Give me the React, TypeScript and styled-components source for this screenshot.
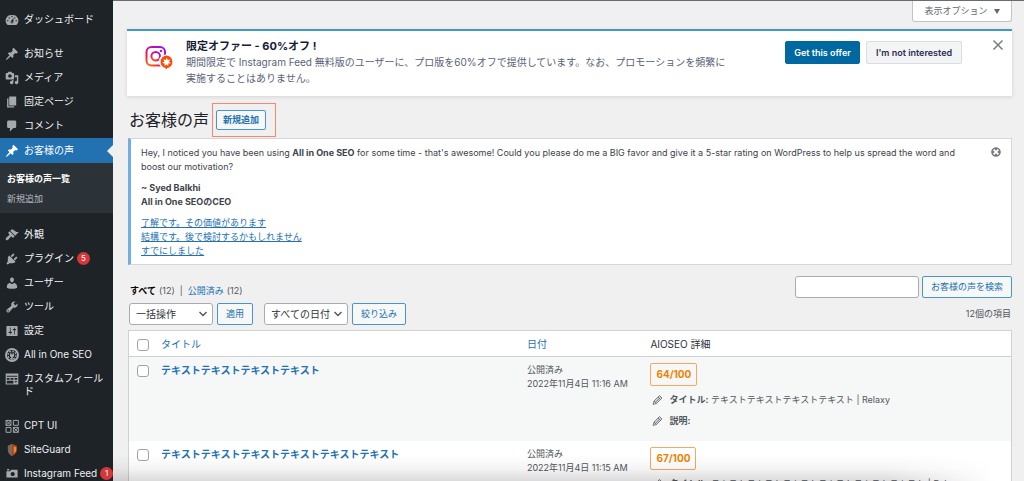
import React from "react";
import styled, { createGlobalStyle } from "styled-components";

const Global = createGlobalStyle`
  * { box-sizing: border-box; }
  body {
    margin: 0;
    background: #f0f0f1;
    color: #3c434a;
    font-family: Inter, "Noto Sans CJK JP", sans-serif;
    font-size: 9px;
    line-height: 14px;
  }
  ul { list-style: none; margin: 0; padding: 0; }
  p { margin: 0; }
  button, input, select { font: inherit; }
  button { cursor: pointer; }
`;

const Shell = styled.div`
  position: relative;
  display: grid;
  grid-template-columns: 113px minmax(0, 1fr);
  height: 100vh;
  overflow: hidden;
`;

const Sidebar = styled.nav`
  background: #1d2327;
  padding-top: 8px;
  font-size: 10px;
  line-height: 13px;
  overflow: hidden;
`;

const MenuGroup = styled.ul<{ $flush?: boolean }>`
  margin-bottom: ${(p) => (p.$flush ? "0" : "10px")};
`;

const MenuLink = styled.a<{ $active?: boolean }>`
  position: relative;
  display: grid;
  grid-template-columns: 24px minmax(0, 1fr);
  align-items: start;
  padding: ${(p) => (p.$active ? "6px 0" : "5px 0 6px")};
  color: ${(p) => (p.$active ? "#fff" : "#f0f0f1")};
  background: ${(p) => (p.$active ? "#2271b1" : "transparent")};
  text-decoration: none;
  svg { display: block; margin: 0 auto -1px; color: ${(p) => (p.$active ? "#fff" : "#a7aaad")}; }
  &::after {
    content: "";
    display: ${(p) => (p.$active ? "block" : "none")};
    position: absolute;
    right: 0;
    top: 7px;
    border: 6px solid transparent;
    border-right-color: #f0f0f1;
    border-left-width: 0;
  }
`;

const MenuText = styled.span`
  padding-right: 8px;
`;

const MenuLine = styled.span`
  display: flex;
  align-items: center;
  gap: 3px;
  white-space: nowrap;
`;

const Badge = styled.span`
  flex: none;
  width: 13px;
  height: 13px;
  border-radius: 50%;
  background: #d63638;
  color: #fff;
  font-size: 8px;
  text-align: center;
`;

const Submenu = styled.ul`
  padding: 6px 0 4px;
  background: #2c3338;
  margin-bottom: 10px;
`;

const SubLink = styled.a<{ $current?: boolean }>`
  display: block;
  padding: 0 7px;
  font-size: 9px;
  line-height: 20px;
  text-decoration: none;
  font-weight: ${(p) => (p.$current ? 700 : 400)};
  color: ${(p) => (p.$current ? "#fff" : "#b4b9be")};
`;

const Main = styled.main`
  border-top: 1px solid #6b6b73;
  padding: 0 12px 0 14px;
`;

const TopBar = styled.div`
  display: flex;
  justify-content: flex-end;
  align-items: flex-start;
  height: 28px;
`;

const OptionsButton = styled.button`
  height: 21px;
  width: 100px;
  border: 1px solid #c3c4c7;
  border-top: 0;
  border-radius: 0 0 3px 3px;
  background: #fff;
  color: #646970;
  padding: 0;
  display: flex;
  align-items: center;
  justify-content: center;
  gap: 6px;
`;

const Offer = styled.section`
  display: flex;
  align-items: flex-start;
  border-top: 2px solid #4199c4;
  background: #fff;
  box-shadow: 0 1px 4px rgba(0, 0, 0, 0.12);
  padding: 8px 8px 10px 17px;
`;

const OfferLogo = styled.div`
  width: 42px;
  padding-top: 6px;
  flex: none;
  line-height: 0;
`;

const OfferBody = styled.div`
  flex: 1;
  max-width: 548px;
  margin-right: auto;
  font-size: 10px;
  line-height: 16px;
  color: #5a5f7a;
`;

const OfferTitle = styled.h2`
  margin: 0;
  font-size: 11px;
  line-height: 15px;
  color: #141b38;
`;

const OfferActions = styled.div`
  display: flex;
  gap: 6px;
  padding-top: 2px;
`;

const OfferButton = styled.button<{ $primary?: boolean }>`
  height: 23px;
  width: ${(p) => (p.$primary ? "75px" : "96px")};
  padding: 0;
  border: 1px solid ${(p) => (p.$primary ? "#0068a0" : "#dcdde1")};
  border-radius: 2px;
  background: ${(p) => (p.$primary ? "#0068a0" : "#f3f4f5")};
  color: ${(p) => (p.$primary ? "#fff" : "#2a2d4f")};
  font-weight: 600;
  white-space: nowrap;
`;

const IconButton = styled.button`
  border: 0;
  padding: 0;
  background: none;
  color: #787c82;
  line-height: 0;
`;

const OfferClose = styled(IconButton)`
  margin-left: 30px;
`;

const TitleRow = styled.div`
  display: flex;
  align-items: center;
  gap: 3px;
  padding: 7px 0 1px 2px;
`;

const PageTitle = styled.h1`
  margin: 0;
  font-size: 16px;
  line-height: 20px;
  font-weight: 400;
  color: #1d2327;
`;

const Highlight = styled.div`
  border: 1px solid #fa8570;
  padding: 6px 9px 6px 3px;
`;

const ActionButton = styled.button<{ $compact?: boolean }>`
  height: ${(p) => (p.$compact ? "20px" : "22px")};
  padding: 0 ${(p) => (p.$compact ? "6px" : "8px")};
  border: 1px solid #4a94cc;
  border-radius: 2px;
  background: #f6f7f7;
  color: #2271b1;
  font-weight: ${(p) => (p.$compact ? 600 : 400)};
  white-space: nowrap;
`;

const Notice = styled.section`
  display: flex;
  justify-content: space-between;
  align-items: flex-start;
  margin-left: 1px;
  padding: 7px 9px 6px 10px;
  border: 1px solid #d5d6d8;
  border-left: 3px solid #72aee6;
  background: #fff;
`;

const NoticeBody = styled.div`
  display: grid;
  gap: 7px;
`;

const NoticeText = styled.p`
  max-width: 840px;
`;

const TextLink = styled.a<{ $underline?: boolean }>`
  color: #2271b1;
  text-decoration: ${(p) => (p.$underline ? "underline" : "none")};
`;

const FilterBar = styled.div`
  display: flex;
  justify-content: space-between;
  align-items: flex-end;
  padding: 11px 0 0 3px;
`;

const Views = styled.div`
  display: flex;
  gap: 5px;
  color: #50575e;
  strong { color: #000; }
`;

const View = styled.span`
  display: flex;
  gap: 3px;
`;

const SearchForm = styled.form`
  display: flex;
  gap: 3px;
`;

const SearchInput = styled.input`
  width: 124px;
  height: 22px;
  border: 1px solid #a9abb0;
  border-radius: 3px;
  background: #fff;
  padding: 0 6px;
`;

const TableNav = styled.div`
  display: flex;
  align-items: center;
  gap: 4px;
  padding: 5px 1px 5px 2px;
`;

const SelectWrap = styled.label<{ $spaced?: boolean }>`
  position: relative;
  width: 84px;
  margin-left: ${(p) => (p.$spaced ? "7px" : "0")};
  svg { position: absolute; right: 5px; top: 7px; pointer-events: none; }
`;

const Select = styled.select`
  appearance: none;
  display: block;
  width: 100%;
  height: 22px;
  border: 1px solid #a9abb0;
  border-radius: 3px;
  background: #fff;
  color: #2c3338;
  font-size: 10px;
  line-height: 14px;
  padding: 0 0 0 6px;
`;

const ItemCount = styled.span`
  margin-left: auto;
  color: #50575e;
`;

const Table = styled.table`
  width: calc(100% - 1px);
  margin-left: 1px;
  table-layout: fixed;
  border-spacing: 0;
  border: 1px solid #d0d1d4;
  background: #fff;
`;

const HeadCell = styled.th<{ $width?: string }>`
  width: ${(p) => p.$width ?? "auto"};
  height: 26px;
  padding: 0 0 0 1px;
  border-bottom: 1px solid #d0d1d4;
  text-align: left;
  font-weight: 400;
  font-size: 10px;
  color: #2c3338;
`;

const Row = styled.tr<{ $striped?: boolean }>`
  height: 84px;
  background: ${(p) => (p.$striped ? "#f6f7f7" : "#fff")};
`;

const Cell = styled.td`
  padding: 6px 0 0 1px;
  vertical-align: top;
  color: #50575e;
`;

const CheckBox = styled.input`
  appearance: none;
  display: block;
  width: 12px;
  height: 12px;
  margin: 2px 0 0 7px;
  border: 1px solid #a0a3a8;
  border-radius: 3px;
  background: #fff;
`;

const RowTitle = styled.a`
  color: #2271b1;
  font-size: 10px;
  font-weight: 700;
  text-decoration: none;
`;

const Score = styled.span`
  display: inline-block;
  padding: 0 5px;
  border: 1px solid #f5a95c;
  border-radius: 2px;
  color: #f18200;
  font-size: 10px;
  font-weight: 700;
  line-height: 21px;
`;

const Detail = styled.div`
  display: flex;
  align-items: center;
  gap: 6px;
  height: 14px;
  margin-bottom: 7px;
  padding-left: 2px;
  white-space: nowrap;
  ${Score} + & { margin-top: 7px; }
`;

const BottomShade = styled.div`
  position: absolute;
  left: 113px;
  right: 30px;
  bottom: 0;
  height: 26px;
  background: linear-gradient(to bottom, rgba(0, 0, 0, 0), rgba(0, 0, 0, 0.04) 50%, rgba(0, 0, 0, 0.14));
  mask-image: linear-gradient(to right, #000 88%, transparent);
  pointer-events: none;
`;

const icons: Record<string, string> = {
  dashboard:
    "M3.76 17h12.48A7.998 7.998 0 0010 3a8 8 0 00-6.24 14zM10 4c.55 0 1 .45 1 1s-.45 1-1 1-1-.45-1-1 .45-1 1-1zM6 6c.55 0 1 .45 1 1s-.45 1-1 1-1-.45-1-1 .45-1 1-1zm8 0c.55 0 1 .45 1 1s-.45 1-1 1-1-.45-1-1 .45-1 1-1zm-5.37 5.55L12 7v6c0 1.1-.9 2-2 2s-2-.9-2-2c0-.57.24-1.08.63-1.45zM4 10c.55 0 1 .45 1 1s-.45 1-1 1-1-.45-1-1 .45-1 1-1zm12 0c.55 0 1 .45 1 1s-.45 1-1 1-1-.45-1-1 .45-1 1-1zm-5 3c0-.55-.45-1-1-1s-1 .45-1 1 .45 1 1 1 1-.45 1-1z",
  pin: "M10.44 3.02l1.82-1.82 6.36 6.35-1.83 1.82c-1.05-.68-2.48-.57-3.41.36l-.75.75c-.92.93-1.04 2.35-.35 3.41l-1.83 1.82-2.41-2.41-2.8 2.79c-.42.42-3.38 2.71-3.8 2.29s1.86-3.39 2.28-3.81l2.79-2.79L4.1 9.36l1.83-1.82c1.05.69 2.48.57 3.4-.36l.75-.75c.93-.92 1.05-2.35.36-3.41z",
  media:
    "M13 11V4c0-.55-.45-1-1-1h-1.67L9 1H5L3.67 3H2c-.55 0-1 .45-1 1v7c0 .55.45 1 1 1h10c.55 0 1-.45 1-1zM7 4.5c1.38 0 2.5 1.12 2.5 2.5S8.38 9.5 7 9.5 4.5 8.38 4.5 7 5.62 4.5 7 4.5zM14 6h5v10.5c0 1.38-1.12 2.5-2.5 2.5S14 17.88 14 16.5s1.12-2.5 2.5-2.5c.17 0 .34.02.5.05V9h-3V6zm-4 8.05V13h2v3.5c0 1.38-1.12 2.5-2.5 2.5S7 17.88 7 16.5 8.12 14 9.5 14c.17 0 .34.02.5.05z",
  page: "M6 15V2h10v13H6zm-1 1h8v2H3V5h2v11z",
  comment: "M5 2h9c1.1 0 2 .9 2 2v7c0 1.1-.9 2-2 2h-2l-5 5v-5H5c-1.1 0-2-.9-2-2V4c0-1.1.9-2 2-2z",
  appearance:
    "M14.48 11.06L7.41 3.99l1.5-1.5c.5-.56 2.3-.47 3.51.32 1.21.8 1.43 1.28 2.91 2.1 1.18.64 2.45 1.26 4.45.85zm-.71.71L6.7 4.7 4.93 6.47c-.39.39-.39 1.02 0 1.41l1.06 1.06c.39.39.39 1.03 0 1.42-.6.6-1.43 1.11-2.21 1.69-.35.26-.7.53-1.01.84C1.43 14.23.4 16.08 1.4 17.07c.99 1 2.84-.03 4.18-1.36.31-.31.58-.66.85-1.02.57-.78 1.08-1.61 1.69-2.21.39-.39 1.02-.39 1.41 0l1.06 1.06c.39.39 1.02.39 1.41 0z",
  plugin:
    "M13.11 4.36L9.87 7.6 8 5.73l3.24-3.24c.35-.34 1.05-.2 1.56.32.52.51.66 1.21.31 1.55zm-8 1.77l.91-1.12 9.01 9.01-1.19.84c-.71.71-2.63 1.16-3.82 1.16H6.14L4.9 17.26c-.59.59-1.54.59-2.12 0-.59-.58-.59-1.53 0-2.12l1.24-1.24v-3.88c0-1.13.4-3.19 1.09-3.89zm7.26 3.97l3.24-3.24c.34-.35 1.04-.21 1.55.31.52.51.66 1.21.31 1.55l-3.24 3.25z",
  user: "M10 9.25c-2.27 0-2.73-3.44-2.73-3.44C7 4.02 7.82 2 9.97 2c2.16 0 2.98 2.02 2.71 3.81 0 0-.41 3.44-2.68 3.44zm0 2.57L12.72 10c2.39 0 4.52 2.33 4.52 4.53v2.49s-3.65 1.13-7.24 1.13c-3.65 0-7.24-1.13-7.24-1.13v-2.49c0-2.25 1.94-4.48 4.47-4.48z",
  tools:
    "M16.68 9.77c-1.34 1.34-3.3 1.67-4.95.99l-5.41 6.52c-.99.99-2.59.99-3.58 0s-.99-2.59 0-3.57l6.52-5.42c-.68-1.65-.35-3.61.99-4.95 1.28-1.28 3.12-1.62 4.72-1.06l-2.89 2.89 2.82 2.82 2.86-2.87c.53 1.58.18 3.39-1.08 4.65zM3.81 16.21c.4.39 1.04.39 1.43 0 .4-.4.4-1.04 0-1.43-.39-.4-1.03-.4-1.43 0-.39.39-.39 1.03 0 1.43z",
  settings:
    "M18 16V4c0-.55-.45-1-1-1H3c-.55 0-1 .45-1 1v12c0 .55.45 1 1 1h14c.55 0 1-.45 1-1zM8 11h1c.55 0 1 .45 1 1s-.45 1-1 1H8v1.5c0 .28-.22.5-.5.5s-.5-.22-.5-.5V13H6c-.55 0-1-.45-1-1s.45-1 1-1h1V5.5c0-.28.22-.5.5-.5s.5.22.5.5V11zm5-2h-1c-.55 0-1-.45-1-1s.45-1 1-1h1V5.5c0-.28.22-.5.5-.5s.5.22.5.5V7h1c.55 0 1 .45 1 1s-.45 1-1 1h-1v5.5c0 .28-.22.5-.5.5s-.5-.22-.5-.5V9z",
  fields:
    "M1 2h18v16H1zM2.500 5.500v1.200h15V5.500zM2.500 8.500v2.500h4V8.500zM8 8.500v2.500h4V8.500zM13.500 8.500v2.500h4V8.500zM2.500 12.500v3.800h9.500v-3.800zM13.500 13l2 2.500 2-2.500z",
  camera:
    "M6 5V3H3v2h3zm12 10V4H9L7 6H2v9h16zm-7-8c1.65 0 3 1.35 3 3s-1.35 3-3 3-3-1.35-3-3 1.35-3 3-3z",
  dismiss:
    "M10 2c4.42 0 8 3.58 8 8s-3.58 8-8 8-8-3.58-8-8 3.58-8 8-8zm5 11l-3-3 3-3-2-2-3 3-3-3-2 2 3 3-3 3 2 2 3-3 3 3z",
};

function Glyph({ name, size = 14 }: { name: string; size?: number }) {
  if (name === "aioseo") {
    return (
      <svg width={size} height={size} viewBox="0 0 20 20" fill="none" stroke="currentColor">
        <circle cx="10" cy="10" r="8.600" strokeWidth="2.800" />
        <circle cx="10" cy="10" r="5.700" strokeWidth="1.800" strokeDasharray="2.600 1.800" />
        <path d="M8.300 6.500v3M11.700 6.500v3" strokeWidth="1.400" />
        <path d="M7 9h6v2.500l-2 2V18H9v-4.500l-2-2z" fill="currentColor" stroke="none" />
      </svg>
    );
  }
  if (name === "cptui") {
    return (
      <svg width={size} height={size} viewBox="0 0 20 20" fill="none" stroke="currentColor" strokeWidth="1.400">
        <path d="M1.500 2h7v7h-7zM12 2h7v7h-7zM1.500 12h7v7h-7zM12 12h7v7h-7zM1.500 2l7 7M8.500 2l-7 7M12 12l7 7M19 12l-7 7" />
      </svg>
    );
  }
  if (name === "siteguard") {
    return (
      <svg width={size} height={size} viewBox="0 0 20 20">
        <path d="M4 4l6-3v18c-4-2.500-6-5-6-9z" fill="#6b6a6c" />
        <path d="M7 3.500L10 2v16c-2-2-3-4.500-3-8z" fill="#8d6550" />
        <path d="M10 1l7 3v6c0 4-3 6.500-7 9z" fill="#a8431c" />
        <path d="M12.500 4.500L16 6v4c0 2-1.500 3.500-3.500 5z" fill="#df8c3c" />
      </svg>
    );
  }
  return (
    <svg width={size} height={size} viewBox="0 0 20 20" fill="currentColor" fillRule={name === "fields" ? "evenodd" : "nonzero"}>
      <path d={icons[name]} />
    </svg>
  );
}

function Pencil() {
  return (
    <svg width="11" height="12" viewBox="0 0 22 24" fill="none" stroke="#5d636a" strokeWidth="1.500" strokeLinejoin="round">
      <path d="M2 21l2-7L15 3l5 5L9 19z" fill="#d4d6d8" />
      <path d="M12 6l5 5M4 14l5 5M7 16.500l9-9" />
    </svg>
  );
}

function Chevron() {
  return (
    <svg width="10" height="8" viewBox="0 0 10 8" fill="none" stroke="#50575e" strokeWidth="1.400">
      <path d="M1.500 2L5 5.500 8.500 2" />
    </svg>
  );
}

function InstagramLogo() {
  return (
    <svg width="30" height="26" viewBox="0 0 30 26">
      <defs>
        <linearGradient id="insta" x1="0" y1="1" x2="0.700" y2="0">
          <stop offset="0" stopColor="#ff7a00" />
          <stop offset="0.350" stopColor="#f4154f" />
          <stop offset="0.700" stopColor="#d6118f" />
          <stop offset="1" stopColor="#a012d8" />
        </linearGradient>
      </defs>
      <rect x="2.500" y="2" width="18.500" height="18.500" rx="5" fill="none" stroke="url(#insta)" strokeWidth="2" />
      <circle cx="11.700" cy="11.200" r="4.300" fill="none" stroke="url(#insta)" strokeWidth="2" />
      <circle cx="17" cy="6" r="1.200" fill="#c414a8" />
      <path d="M22.500 9.500a7 7 0 0 1 1 14L20.800 25.500l.2-2A7 7 0 0 1 22.500 9.500z" fill="#fff" />
      <path d="M22.500 10.500a6 6.300 0 0 1 1 12.500L21.500 24.600V23A6 6.300 0 0 1 22.500 10.500z" fill="#fe4a08" />
      <path d="M22.800 12.400l.9 2.700 2.700-.7-1.400 2.300 1.900 1.600-2.700.3.100 2.500-1.800-1.700-1.900 1.600.2-2.500-2.500-.5 2-1.500-1-2.300 2.400.7z" fill="#fff" />
    </svg>
  );
}

type Entry = { icon: string; text: string; badge?: string; active?: boolean };

const groups: Entry[][] = [
  [{ icon: "dashboard", text: "ダッシュボード" }],
  [
    { icon: "pin", text: "お知らせ" },
    { icon: "media", text: "メディア" },
    { icon: "page", text: "固定ページ" },
    { icon: "comment", text: "コメント" },
    { icon: "pin", text: "お客様の声", active: true },
  ],
  [
    { icon: "appearance", text: "外観" },
    { icon: "plugin", text: "プラグイン", badge: "5" },
    { icon: "user", text: "ユーザー" },
    { icon: "tools", text: "ツール" },
    { icon: "settings", text: "設定" },
    { icon: "aioseo", text: "All in One SEO" },
    { icon: "fields", text: "カスタムフィールド" },
  ],
  [
    { icon: "cptui", text: "CPT UI" },
    { icon: "siteguard", text: "SiteGuard" },
    { icon: "camera", text: "Instagram Feed", badge: "1" },
  ],
];

function Menu({ items, flush }: { items: Entry[]; flush?: boolean }) {
  return (
    <MenuGroup $flush={flush}>
      {items.map((it) => (
        <li key={it.text}>
          <MenuLink href="#" $active={it.active}>
            <Glyph name={it.icon} />
            {it.badge ? (
              <MenuLine>
                {it.text}
                <Badge>{it.badge}</Badge>
              </MenuLine>
            ) : (
              <MenuText>{it.text}</MenuText>
            )}
          </MenuLink>
        </li>
      ))}
    </MenuGroup>
  );
}

const posts = [
  { title: "テキストテキストテキストテキスト", date: "2022年11月4日 11:16 AM", score: "64/100" },
  { title: "テキストテキストテキストテキストテキストテキスト", date: "2022年11月4日 11:15 AM", score: "67/100" },
];

export default function App() {
  return (
    <>
      <Global />
      <Shell>
        <Sidebar>
          <Menu items={groups[0]} />
          <Menu items={groups[1]} flush />
          <Submenu>
            <li><SubLink href="#" $current>お客様の声一覧</SubLink></li>
            <li><SubLink href="#">新規追加</SubLink></li>
          </Submenu>
          <Menu items={groups[2]} />
          <Menu items={groups[3]} />
        </Sidebar>

        <Main>
          <TopBar>
            <OptionsButton type="button">
              表示オプション
              <svg width="6" height="5" viewBox="0 0 6 5" fill="#646970"><path d="M0 0h6L3 5z" /></svg>
            </OptionsButton>
          </TopBar>

          <Offer>
            <OfferLogo><InstagramLogo /></OfferLogo>
            <OfferBody>
              <OfferTitle>限定オファー - 60%オフ !</OfferTitle>
              <p>期間限定で Instagram Feed 無料版のユーザーに、プロ版を60%オフで提供しています。なお、プロモーションを頻繁に実施することはありません。</p>
            </OfferBody>
            <OfferActions>
              <OfferButton type="button" $primary>Get this offer</OfferButton>
              <OfferButton type="button">I'm not interested</OfferButton>
            </OfferActions>
            <OfferClose type="button" aria-label="閉じる">
              <svg width="12" height="12" viewBox="0 0 12 12" stroke="currentColor" strokeWidth="1.500">
                <path d="M1.500 1.500l9 9M10.500 1.500l-9 9" />
              </svg>
            </OfferClose>
          </Offer>

          <TitleRow>
            <PageTitle>お客様の声</PageTitle>
            <Highlight>
              <ActionButton type="button" $compact>新規追加</ActionButton>
            </Highlight>
          </TitleRow>

          <Notice>
            <NoticeBody>
              <NoticeText>
                Hey, I noticed you have been using <strong>All in One SEO</strong> for some time - that's awesome! Could you
                please do me a BIG favor and give it a 5-star rating on WordPress to help us spread the word and boost our
                motivation?
              </NoticeText>
              <p>
                <strong>~ Syed Balkhi<br />All in One SEOのCEO</strong>
              </p>
              <p>
                <TextLink href="#" $underline>了解です。その価値があります</TextLink><br />
                <TextLink href="#" $underline>結構です。後で検討するかもしれません</TextLink><br />
                <TextLink href="#" $underline>すでにしました</TextLink>
              </p>
            </NoticeBody>
            <IconButton type="button" aria-label="この通知を非表示にする"><Glyph name="dismiss" size={12} /></IconButton>
          </Notice>

          <FilterBar>
            <Views>
              <View><strong>すべて</strong> <span>(12)</span></View>
              <span>|</span>
              <View><TextLink href="#">公開済み</TextLink> <span>(12)</span></View>
            </Views>
            <SearchForm>
              <SearchInput type="text" aria-label="お客様の声を検索" />
              <ActionButton type="button">お客様の声を検索</ActionButton>
            </SearchForm>
          </FilterBar>

          <TableNav>
            <SelectWrap>
              <Select aria-label="一括操作"><option>一括操作</option></Select>
              <Chevron />
            </SelectWrap>
            <ActionButton type="button">適用</ActionButton>
            <SelectWrap $spaced>
              <Select aria-label="日付で絞り込む"><option>すべての日付</option></Select>
              <Chevron />
            </SelectWrap>
            <ActionButton type="button">絞り込み</ActionButton>
            <ItemCount>12個の項目</ItemCount>
          </TableNav>

          <Table>
            <thead>
              <tr>
                <HeadCell $width="31px"><CheckBox type="checkbox" aria-label="すべて選択" /></HeadCell>
                <HeadCell><TextLink href="#">タイトル</TextLink></HeadCell>
                <HeadCell $width="14%"><TextLink href="#">日付</TextLink></HeadCell>
                <HeadCell $width="41%">AIOSEO 詳細</HeadCell>
              </tr>
            </thead>
            <tbody>
              {posts.map((p, i) => (
                <Row key={p.title} $striped={i % 2 === 0}>
                  <Cell><CheckBox type="checkbox" aria-label={p.title} /></Cell>
                  <Cell><RowTitle href="#">{p.title}</RowTitle></Cell>
                  <Cell>公開済み<br />{p.date}</Cell>
                  <Cell>
                    <Score>{p.score}</Score>
                    <Detail><Pencil /><span><strong>タイトル:</strong> {p.title} | Relaxy</span></Detail>
                    <Detail><Pencil /><strong>説明:</strong></Detail>
                  </Cell>
                </Row>
              ))}
            </tbody>
          </Table>
        </Main>
        <BottomShade />
      </Shell>
    </>
  );
}
